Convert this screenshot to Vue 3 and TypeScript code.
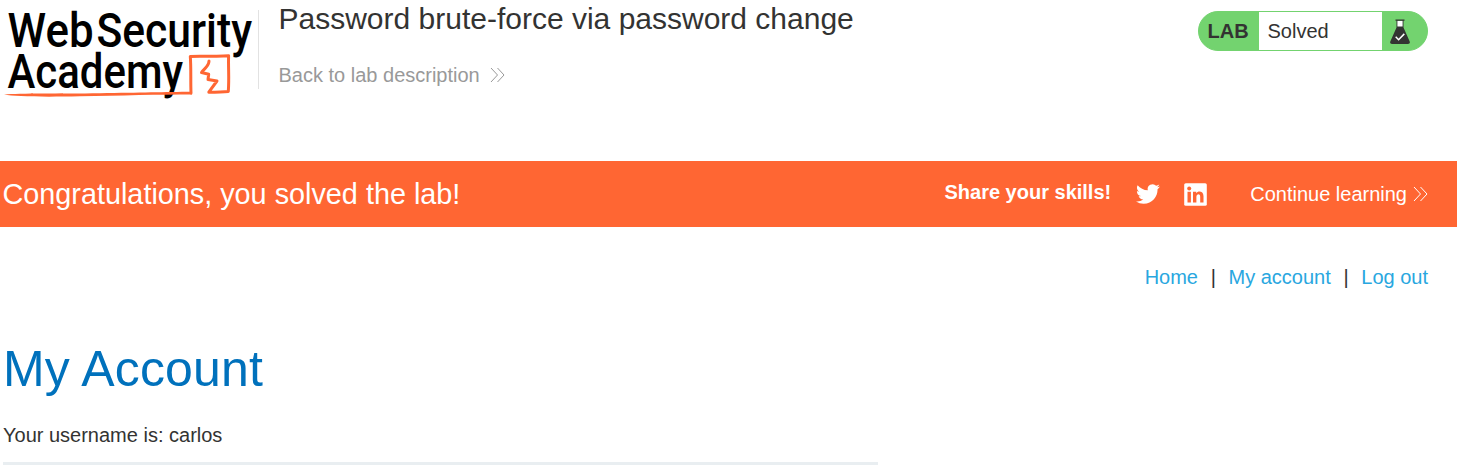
<script setup lang="ts">
interface NavLink {
  label: string
}

const title: string = 'Password brute-force via password change'
const username: string = 'carlos'
const links: NavLink[] = [{ label: 'Home' }, { label: 'My account' }, { label: 'Log out' }]
</script>

<template>
  <div class="page">
    <header class="header">
      <svg class="logo" width="258" height="104" viewBox="0 0 258 104" role="img" aria-label="Web Security Academy">
        <g class="logo-text">
          <text x="7.500" y="47" textLength="86" lengthAdjust="spacingAndGlyphs">Web</text>
          <text x="96.500" y="47" textLength="155.500" lengthAdjust="spacingAndGlyphs">Security</text>
          <text x="7.500" y="88" textLength="175.500" lengthAdjust="spacingAndGlyphs">Academy</text>
        </g>
        <path class="swash" d="M4 94.600C20 93 60 94 100 93.300S165 92 192 91.800V94.500C160 94.500 120 95.500 80 96.300S15 96.500 4 94.600Z" />
        <path class="frame" d="M191 93C190.500 80 191.200 68 190.300 56.500C203 56.300 216 56.300 228.600 55.700C228.200 67 229.300 79 228.300 91.500C221 91.700 214 92.500 208.800 92.200L217 81L208 79.500L208.700 74.200L201.500 72.500C204.500 68 209 66.500 209 61" />
      </svg>
      <div class="title-box">
        <h2 class="title">{{ title }}</h2>
        <a class="back">
          <span>Back to lab description</span>
          <svg width="15" height="16" viewBox="0 0 15 16"><path d="M1 1L7.500 8L1 15M7.500 1L14 8L7.500 15" /></svg>
        </a>
      </div>
      <div class="status">
        <span class="lab">LAB</span>
        <span class="solved">Solved</span>
        <span class="flask">
          <svg width="20" height="26" viewBox="0 0 20 26">
            <path d="M7 2H13V9H7Z" fill="#fff" />
            <path d="M5.500 .5H14.500V1.800H13.500V8.500L19.700 22.500Q20.500 25 18 25H2Q-.5 25 .3 22.500L6.500 8.500V1.800H5.500ZM7.400 1.800V7.500H12.600V1.800Z" fill="#333332" fill-rule="evenodd" />
            <path d="M5.700 17.800L8.600 20.700L14.300 14.900" fill="none" stroke="#fff" stroke-width="1.500" />
          </svg>
        </span>
      </div>
    </header>

    <section class="banner">
      <h4 class="congrats">Congratulations, you solved the lab!</h4>
      <span class="share">Share your skills!</span>
      <svg class="twitter" width="24" height="24" viewBox="0 0 24 24">
        <path fill="#fff" d="M23.950 4.570a10 10 0 0 1-2.820.770 4.960 4.960 0 0 0 2.160-2.720c-.950.560-2 .960-3.130 1.190a4.920 4.920 0 0 0-8.380 4.480C7.690 8.090 4.070 6.130 1.640 3.160a4.820 4.820 0 0 0-.670 2.480c0 1.710.870 3.210 2.190 4.100a4.900 4.900 0 0 1-2.230-.620v.060a4.920 4.920 0 0 0 3.950 4.830 5 5 0 0 1-2.210.080 4.940 4.940 0 0 0 4.600 3.420A9.870 9.870 0 0 1 0 19.540a13.990 13.990 0 0 0 7.550 2.210c9.050 0 14-7.500 14-13.980 0-.210 0-.420-.020-.630a9.940 9.940 0 0 0 2.420-2.570z" />
      </svg>
      <svg class="linkedin" width="23" height="23" viewBox="0 0 23 23">
        <rect x=".2" y=".2" width="22.600" height="22.600" rx="1.600" fill="#fff" />
        <g fill="#ff6633">
          <circle cx="5.200" cy="5.400" r="2" />
          <path d="M3.500 8.800H6.900V19.500H3.500ZM9 8.800H12.200V10.300C13.900 7.600 19.500 7.900 19.500 13V19.500H16.200V13.800C16.200 10.300 12.400 10.800 12.400 13.800V19.500H9Z" />
        </g>
      </svg>
      <a class="continue">
        <span>Continue learning</span>
        <svg width="15" height="16" viewBox="0 0 15 16"><path d="M1 1L7.500 8L1 15M7.500 1L14 8L7.500 15" /></svg>
      </a>
    </section>

    <main class="content">
      <nav class="nav">
        <template v-for="(link, i) in links" :key="link.label">
          <span v-if="i > 0" class="divider">|</span>
          <a>{{ link.label }}</a>
        </template>
      </nav>
      <h1 class="heading">My Account</h1>
      <p class="user">Your username is: {{ username }}</p>
      <div class="form-box"></div>
    </main>
  </div>
</template>

<style>
body {
  background: #fff;
  overflow: hidden;
}
</style>

<style scoped>
.page {
  width: 1457px;
  height: 465px;
  overflow: hidden;
  font-family: "Liberation Sans", Arial, sans-serif;
  font-size: 20px;
  line-height: 24px;
  color: #333332;
}
h1,
h2,
h4,
p {
  margin: 0;
  font-weight: 400;
}
svg {
  display: block;
  flex: none;
}
.logo {
  overflow: visible;
}
.header {
  display: flex;
  align-items: flex-start;
  height: 161px;
  padding-right: 29px;
}
.logo-text {
  font-family: Roboto, sans-serif;
  font-size: 48px;
  font-weight: 500;
  fill: #000;
}
.swash {
  fill: #ff6633;
}
.frame {
  fill: none;
  stroke: #ff6633;
  stroke-width: 3;
  stroke-linejoin: round;
  stroke-linecap: round;
}
.title-box {
  flex: 1;
  height: 79px;
  margin-top: 10px;
  padding-left: 19.500px;
  border-left: 1px solid #e2e2e2;
}
.title {
  margin-top: -9px;
  font-size: 30px;
  line-height: 36px;
}
.back {
  display: flex;
  align-items: center;
  gap: 10.500px;
  margin-top: 26px;
  color: #999;
}
.back svg path,
.continue svg path {
  fill: none;
  stroke: #999;
  stroke-width: 1;
}
.status {
  display: flex;
  box-sizing: border-box;
  width: 230px;
  height: 40px;
  margin-top: 11px;
  border: 1px solid #73d36f;
  border-radius: 20px;
  overflow: hidden;
  background: #73d36f;
  line-height: 39px;
}
.lab {
  width: 60px;
  box-sizing: border-box;
  padding-left: 8.500px;
  font-size: 20px;
  font-weight: 700;
}
.solved {
  width: 123px;
  box-sizing: border-box;
  padding-left: 8.500px;
  background: #fff;
}
.flask {
  padding: 7px 0 0 8px;
}
.banner {
  display: flex;
  align-items: center;
  box-sizing: border-box;
  height: 66px;
  padding: 0 29px 0 2.500px;
  background: #ff6633;
  color: #fff;
}
.congrats {
  flex: 1;
  font-size: 28.800px;
}
.share {
  margin: -4px 25px 0 0;
  font-weight: 700;
}
.linkedin {
  margin-left: 24px;
}
.continue {
  display: flex;
  align-items: center;
  gap: 6px;
  margin-left: 43px;
}
.continue svg path {
  stroke: #fff;
}
.content {
  padding: 38px 29px 0 3px;
}
.nav {
  display: flex;
  justify-content: flex-end;
  color: #29a7df;
}
.divider {
  width: 30.500px;
  text-align: center;
  color: #333332;
}
.heading {
  margin-top: 50px;
  font-size: 50px;
  line-height: 60px;
  letter-spacing: 0.150px;
  color: #0071bc;
}
.user {
  margin-top: 24px;
}
.form-box {
  width: 875px;
  height: 3px;
  margin-top: 15px;
  background: #e9eef1;
}
</style>
